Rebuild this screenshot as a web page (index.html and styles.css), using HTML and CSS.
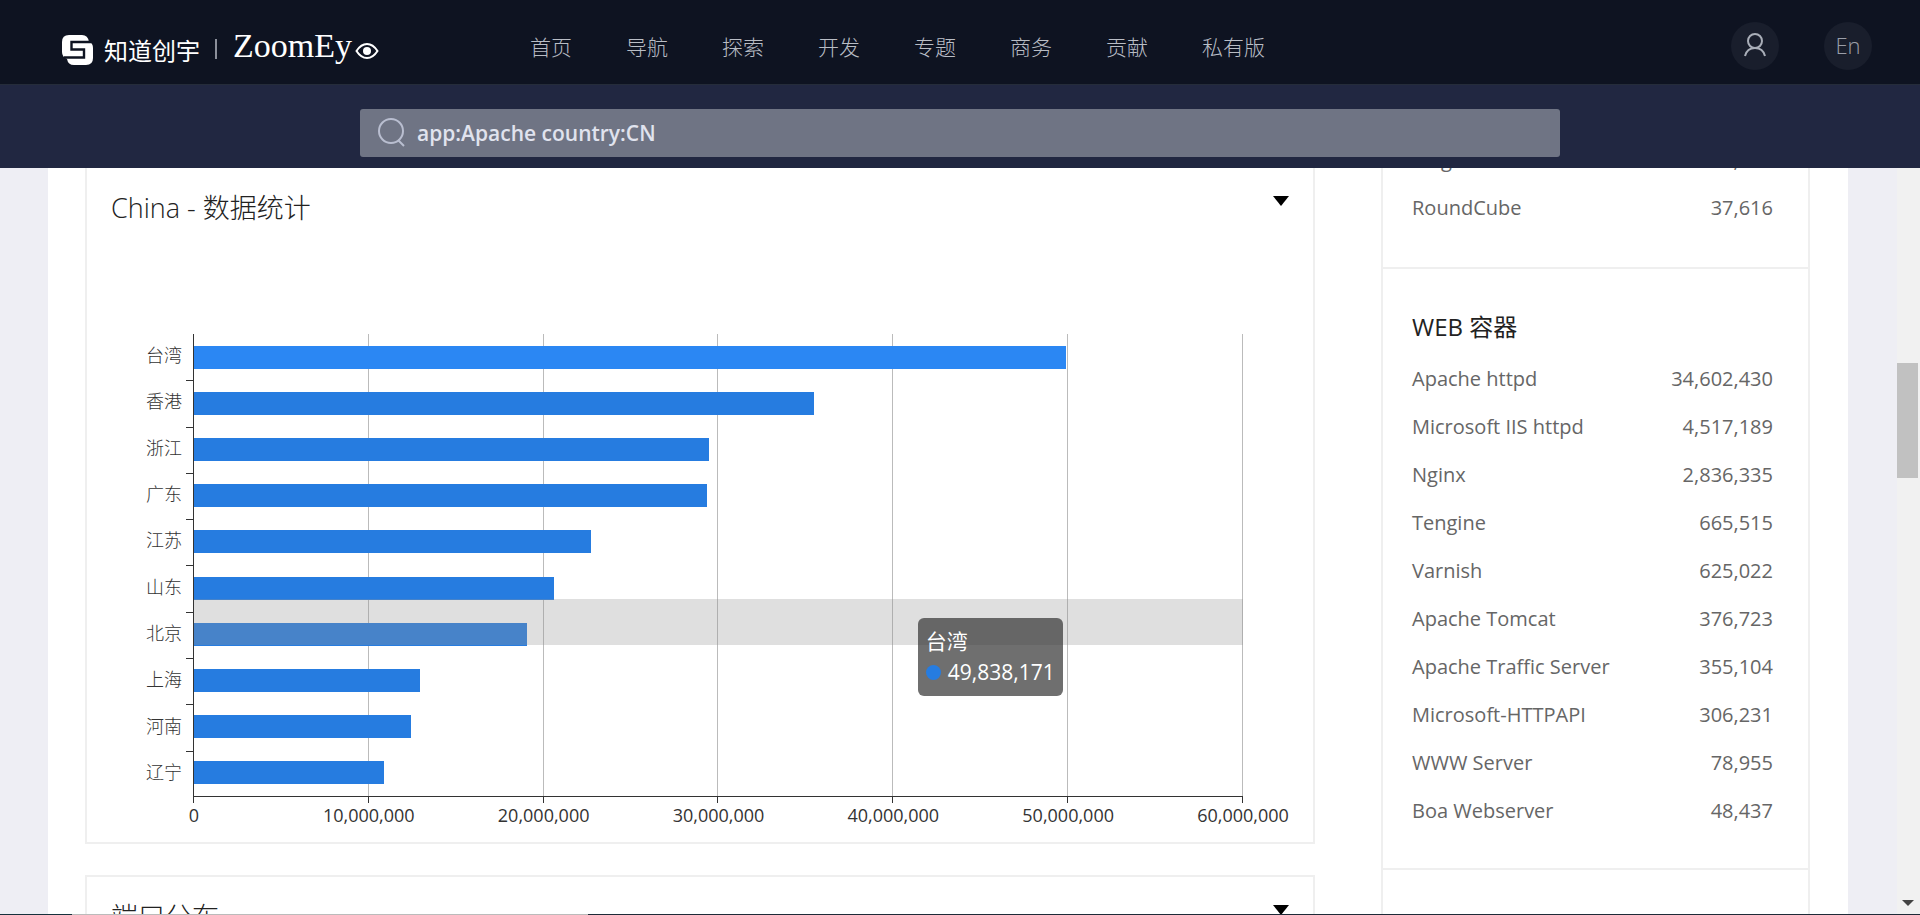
FILE: index.html
```html
<!DOCTYPE html>
<html lang="zh-CN">
<head>
    <meta charset="UTF-8">
    <meta name="viewport" content="width=device-width, initial-scale=1.0">
    <title>ZoomEye</title>
    <link rel="stylesheet" href="styles.css">
</head>
<body>
    <header class="header">
        <a class="logo" href="#">
            <svg class="logo-mark" viewBox="0 0 31 30" aria-hidden="true">
                <path d="M7 0H20Q26 0 27 7Q31 8 31 13V23Q31 30 24 30H12Q6 30 5 24Q0 22 0 17V7Q0 0 7 0z" fill="#fff"/>
                <path d="M29 7H9.500V14.500H22V22.500H2" fill="none" stroke="#0e1321" stroke-width="2.400"/>
            </svg>
            <span class="logo-company">知道创宇</span>
            <span class="logo-line"></span>
            <span class="logo-name">ZoomEy</span>
            <svg class="logo-eye" viewBox="0 0 24 18" aria-hidden="true">
                <path d="M1.500 9Q6 2 12 2t10.500 7Q18 16 12 16T1.500 9z" fill="none" stroke="#fff" stroke-width="2"/>
                <circle cx="12" cy="9" r="4" fill="#fff"/>
            </svg>
        </a>
        <nav class="nav">
            <a href="#">首页</a>
            <a href="#">导航</a>
            <a href="#">探索</a>
            <a href="#">开发</a>
            <a href="#">专题</a>
            <a href="#">商务</a>
            <a href="#">贡献</a>
            <a href="#">私有版</a>
        </nav>
        <div class="header-actions">
            <button class="round-btn" type="button" aria-label="用户">
                <svg width="22" height="24" viewBox="0 0 22 24" fill="none" stroke="#a9aeb8" stroke-width="2">
                    <circle cx="11" cy="8" r="7"/>
                    <path d="M1 23Q3 15 11 15t10 8"/>
                </svg>
            </button>
            <button class="round-btn" type="button">En</button>
        </div>
    </header>

    <form class="search-bar">
        <label class="search-box">
            <svg width="28" height="30" viewBox="0 0 28 30" fill="none" stroke="#b9bed0" stroke-width="2">
                <circle cx="14" cy="13" r="12"/>
                <path d="M21 22l6 6"/>
            </svg>
            <input type="text" value="app:Apache country:CN" aria-label="搜索">
        </label>
    </form>

    <div class="viewport">
        <div class="container">
            <main class="main">
                <section class="card card-chart">
                    <div class="card-head">
                        <h2>China - 数据统计</h2>
                        <button class="toggle" type="button" aria-label="收起"></button>
                    </div>
                    <div class="chart">
                        <div class="y-axis">
                            <span>台湾</span>
                            <span>香港</span>
                            <span>浙江</span>
                            <span>广东</span>
                            <span>江苏</span>
                            <span>山东</span>
                            <span>北京</span>
                            <span>上海</span>
                            <span>河南</span>
                            <span>辽宁</span>
                        </div>
                        <div class="plot">
                            <div class="grid-lines">
                                <i></i><i></i><i></i><i></i><i></i><i></i>
                            </div>
                            <div class="bars">
                                <div class="bar active" style="width: 83.1%"></div>
                                <div class="bar" style="width: 59.1%"></div>
                                <div class="bar" style="width: 49.1%"></div>
                                <div class="bar" style="width: 48.9%"></div>
                                <div class="bar" style="width: 37.8%"></div>
                                <div class="bar" style="width: 34.3%"></div>
                                <div class="bar" style="width: 31.7%"></div>
                                <div class="bar" style="width: 21.5%"></div>
                                <div class="bar" style="width: 20.7%"></div>
                                <div class="bar" style="width: 18.1%"></div>
                            </div>
                            <div class="hover-band"></div>
                            <div class="tooltip">
                                <div>台湾</div>
                                <div class="tooltip-value"><span class="dot"></span>49,838,171</div>
                            </div>
                        </div>
                        <div class="x-axis">
                            <span>0</span>
                            <span>10,000,000</span>
                            <span>20,000,000</span>
                            <span>30,000,000</span>
                            <span>40,000,000</span>
                            <span>50,000,000</span>
                            <span>60,000,000</span>
                        </div>
                    </div>
                </section>

                <section class="card">
                    <div class="card-head">
                        <h2>端口分布</h2>
                        <button class="toggle" type="button" aria-label="收起"></button>
                    </div>
                </section>
            </main>

            <aside class="sidebar">
                <section class="stats">
                    <table>
                        <tr><td>Magento</td><td>39,120</td></tr>
                        <tr><td>RoundCube</td><td>37,616</td></tr>
                    </table>
                </section>
                <section class="stats">
                    <h3>WEB 容器</h3>
                    <table>
                        <tr><td>Apache httpd</td><td>34,602,430</td></tr>
                        <tr><td>Microsoft IIS httpd</td><td>4,517,189</td></tr>
                        <tr><td>Nginx</td><td>2,836,335</td></tr>
                        <tr><td>Tengine</td><td>665,515</td></tr>
                        <tr><td>Varnish</td><td>625,022</td></tr>
                        <tr><td>Apache Tomcat</td><td>376,723</td></tr>
                        <tr><td>Apache Traffic Server</td><td>355,104</td></tr>
                        <tr><td>Microsoft-HTTPAPI</td><td>306,231</td></tr>
                        <tr><td>WWW Server</td><td>78,955</td></tr>
                        <tr><td>Boa Webserver</td><td>48,437</td></tr>
                    </table>
                </section>
            </aside>
        </div>
        <div class="scrollbar">
            <div class="thumb"></div>
            <div class="arrow-down"></div>
        </div>
    </div>
    <div class="bottom-edge"></div>
</body>
</html>
```
FILE: styles.css
```css
* {
    box-sizing: border-box;
}
body {
    margin: 0;
    height: 100vh;
    display: flex;
    flex-direction: column;
    overflow: hidden;
    font-family: "Open Sans", "Noto Sans CJK SC", sans-serif;
    background-color: #eeeef4;
}
a {
    color: inherit;
    text-decoration: none;
}
h2, h3 {
    margin: 0;
    font-weight: normal;
}
button {
    border: none;
    padding: 0;
    cursor: pointer;
    font-family: inherit;
}

/* header */
.header {
    flex: none;
    display: flex;
    align-items: center;
    height: 84px;
    padding: 8px 48px 0 62px;
    background-color: #0e1321;
}
.logo {
    display: flex;
    align-items: center;
    width: 468px;
    color: white;
}
.logo-mark {
    width: 31px;
    height: 30px;
    margin-top: 8px;
}
.logo-company {
    margin: 10px 15px 0 11px;
    font-size: 24px;
    line-height: 32px;
}
.logo-line {
    width: 2px;
    height: 20px;
    margin: 6px 16px 0 0;
    background: #8b8f9a;
}
.logo-name {
    font-family: "Liberation Serif", serif;
    font-size: 34px;
    line-height: 40px;
}
.logo-eye {
    width: 24px;
    height: 18px;
    margin: 10px 0 0 3px;
}
.nav {
    display: flex;
    gap: 54px;
    margin-top: 2px;
    color: #b9bdc5;
    font-size: 21px;
    font-weight: 300;
    line-height: 32px;
}
.header-actions {
    display: flex;
    gap: 45px;
    margin-left: auto;
}
.round-btn {
    display: flex;
    align-items: center;
    justify-content: center;
    width: 48px;
    height: 48px;
    padding-bottom: 2px;
    border-radius: 50%;
    background: #191e2c;
    color: #9a9ea8;
    font-size: 22px;
    font-weight: 300;
}

/* search */
.search-bar {
    flex: none;
    display: flex;
    justify-content: center;
    align-items: flex-end;
    height: 84px;
    padding-bottom: 11px;
    background-color: #212741;
    border-top: 1px solid #252c3a;
}
.search-box {
    display: flex;
    align-items: center;
    width: 62.5%;
    height: 48px;
    padding: 0 17px;
    border-radius: 3px;
    background: #6f7484;
}
.search-box input {
    flex: 1;
    margin-left: 12px;
    padding: 0;
    border: none;
    outline: none;
    background: none;
    color: #e0e3ee;
    font-family: inherit;
    font-size: 21px;
    font-weight: 600;
}

/* page */
.viewport {
    flex: 1;
    min-height: 0;
    display: flex;
    overflow: hidden;
}
.container {
    flex: 1;
    display: flex;
    gap: 66px;
    margin: 0 49px 0 48px;
    padding: 0 38px 0 37px;
    background: white;
}
.main {
    flex: 1;
    min-width: 0;
}
.card {
    margin-bottom: 31px;
    padding: 16px 24px 0;
    border: 2px solid #efefef;
}
.card-chart {
    border-top: none;
    padding-bottom: 15px;
}
.card-head {
    display: flex;
    justify-content: space-between;
}
.card h2 {
    color: #222;
    font-size: 27px;
    font-weight: 300;
    line-height: 48px;
}
.toggle {
    width: 0;
    height: 0;
    margin-top: 12px;
    border: 8px solid transparent;
    border-top: 10px solid black;
    border-bottom: none;
    background: none;
}

/* chart */
.chart {
    display: grid;
    grid-template-columns: 83px 1fr;
    margin: 102px 46px 0 0;
    color: #333;
    font-size: 18px;
}
.y-axis {
    display: grid;
    grid-template-rows: repeat(10, 1fr);
    height: 463px;
    font-weight: 300;
    text-align: right;
    border-right: 1px solid #333;
}
.y-axis span {
    position: relative;
    display: flex;
    align-items: center;
    justify-content: flex-end;
    padding: 0 11px 6px 0;
}
.y-axis span + span::before {
    content: "";
    position: absolute;
    top: 0;
    right: 0;
    width: 7px;
    height: 1px;
    background: #333;
}
.plot {
    position: relative;
    border-bottom: 1px solid #333;
}
.grid-lines {
    position: absolute;
    inset: 0;
    display: grid;
    grid-template-columns: repeat(6, 1fr);
}
.grid-lines i {
    border-right: 1px solid #bbb;
}
.bars {
    position: relative;
    display: grid;
    grid-template-rows: repeat(10, 1fr);
    align-items: center;
    height: 100%;
}
.bar {
    height: 23px;
    background: #267ce0;
}
.bar.active {
    background: #2b87f3;
}
.hover-band {
    position: absolute;
    left: 0;
    right: 0;
    top: 57.4%;
    height: 10%;
    background: rgba(150, 150, 150, 0.3);
}
.tooltip {
    position: absolute;
    left: 69%;
    top: 61.5%;
    padding: 8px;
    border-radius: 6px;
    background: rgba(50, 50, 50, 0.7);
    color: white;
    font-size: 21px;
    line-height: 31px;
    white-space: nowrap;
}
.tooltip-value {
    display: flex;
    align-items: center;
}
.dot {
    width: 15px;
    height: 15px;
    margin-right: 7px;
    border-radius: 50%;
    background: #267ce0;
}
.x-axis {
    grid-column: 2;
    display: flex;
    justify-content: space-between;
    line-height: 24px;
}
.x-axis span {
    position: relative;
    display: flex;
    justify-content: center;
    width: 0;
    padding-top: 6px;
}
.x-axis span::before {
    content: "";
    position: absolute;
    top: 0;
    right: 0;
    width: 1px;
    height: 6px;
    background: #333;
}

/* sidebar */
.sidebar {
    width: 429px;
    height: 900px;
    border: 2px solid #efefef;
    border-top: none;
}
.stats {
    padding: 36px 35px 34px 29px;
    border-bottom: 2px solid #efefef;
}
.stats:first-child {
    margin-top: -69px;
    padding-bottom: 36px;
}
.stats h3 {
    color: #222;
    font-size: 24px;
    line-height: 40px;
    padding: 2px 0 7px;
}
.stats table {
    width: 100%;
    border-collapse: collapse;
    color: #666;
    font-size: 20px;
}
.stats td {
    height: 48px;
    padding: 0;
}
.stats td:last-child {
    text-align: right;
}

/* scrollbar */
.scrollbar {
    position: relative;
    width: 23px;
    background: #f1f1f1;
}
.thumb {
    height: 115px;
    margin: 195px 2px 0 0;
    background: #c1c1c1;
}
.arrow-down {
    position: absolute;
    left: 5px;
    bottom: 8px;
    border: 6px solid transparent;
    border-top-color: #444;
    border-bottom: none;
}
.bottom-edge {
    flex: none;
    height: 1px;
    background: linear-gradient(to right, #16313c 72px, #bbb 72px, #bbb 588px, #1e2a38 588px);
}
```
